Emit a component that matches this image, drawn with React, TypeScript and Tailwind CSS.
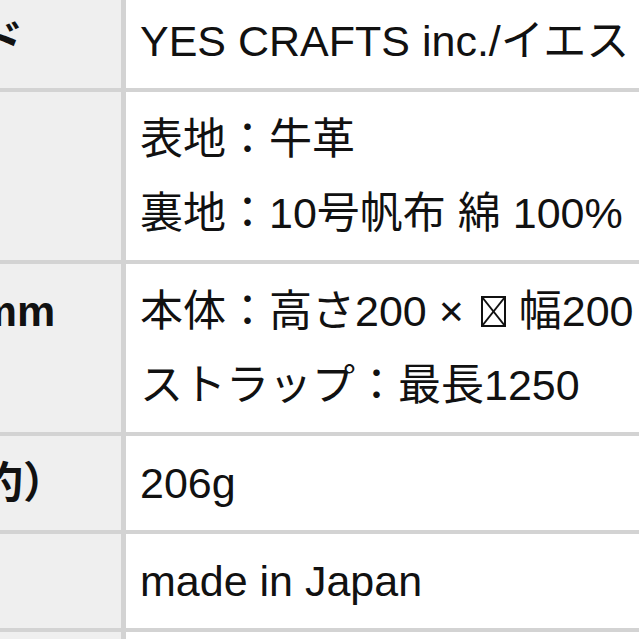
import React from "react";

const font = {
  fontFamily: "'Liberation Sans', 'Noto Sans CJK JP', sans-serif",
};

function Tofu() {
  return (
    <svg
      width="25"
      height="31"
      viewBox="0 0 25 31"
      className="inline-block ml-[5px] mr-[13px]"
      style={{ verticalAlign: "-1px" }}
    >
      <rect x="1" y="1" width="23" height="29" fill="none" stroke="#111" strokeWidth="2" />
      <line x1="1" y1="1" x2="24" y2="30" stroke="#111" strokeWidth="2" />
      <line x1="24" y1="1" x2="1" y2="30" stroke="#111" strokeWidth="2" />
    </svg>
  );
}

function Row({ label, children }: { label: string; children: React.ReactNode }) {
  return (
    <div className="flex border-b-4 border-[#d3d3d3]">
      <div className="w-[289px] shrink-0 bg-[#efefef] pl-[14px] py-[10px] font-bold whitespace-nowrap border-r-[5px] border-[#d3d3d3]">
        {label}
      </div>
      <div className="flex-1 bg-white pl-[14px] py-[10px] whitespace-nowrap">{children}</div>
    </div>
  );
}

export default function App() {
  return (
    <div className="w-[639px] h-[639px] overflow-hidden bg-white relative">
      <div
        className="w-[1100px] -mt-[6px] -ml-[163px] text-[43px] leading-[74px] text-[#111]"
        style={font}
      >
        <Row label="ブランド">
          <div>YES CRAFTS inc./イエス クラフツ</div>
        </Row>
        <Row label="素材">
          <div>表地：牛革</div>
          <div>裏地：10号帆布 綿 100%</div>
        </Row>
        <Row label="サイズmm">
          <div>
            本体：高さ200 × <Tofu />幅200 × マチ60
          </div>
          <div>ストラップ：最長1250</div>
        </Row>
        <Row label="重さ（約）">
          <div>206g</div>
        </Row>
        <Row label="原産国">
          <div>made in Japan</div>
        </Row>
        <Row label="備考">
          <div>&nbsp;</div>
        </Row>
      </div>
    </div>
  );
}
